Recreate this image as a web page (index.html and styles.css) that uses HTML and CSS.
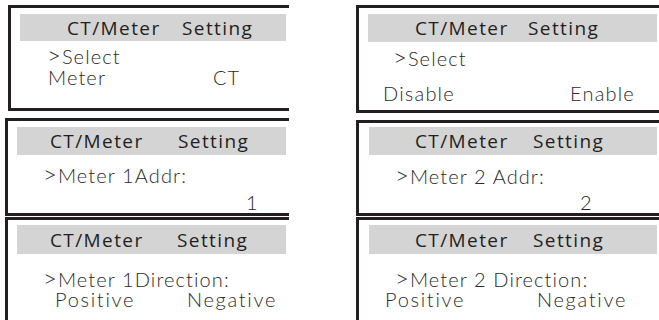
FILE: index.html
```html
<!DOCTYPE html>
<html lang="en">
<head>
<meta charset="UTF-8" />
<title>CT/Meter Setting</title>
<link rel="stylesheet" href="styles.css">
</head>
<body>
  <div class="sheet">
    <div class="col">
      <section class="screen screen-l1">
        <div class="bar bar-l1"><span>CT/Meter</span><span>Setting</span></div>
        <div class="line sel-l1"><span class="caret">&gt;</span>Select</div>
        <div class="line opts opts-l1"><span>Meter</span><span>CT</span></div>
      </section>
      <section class="screen screen-l2">
        <div class="bar bar-l2"><span>CT/Meter</span><span>Setting</span></div>
        <div class="line addr-l2"><span class="caret">&gt;</span>Meter 1Addr:</div>
        <div class="line value-l2">1</div>
      </section>
      <section class="screen screen-last">
        <div class="bar bar-l3"><span>CT/Meter</span><span>Setting</span></div>
        <div class="line dir-l3"><span class="caret">&gt;</span>Meter 1Direction:</div>
        <div class="line opts opts-l3"><span>Positive</span><span>Negative</span></div>
      </section>
    </div>
    <div class="col">
      <section class="screen screen-r1">
        <div class="bar bar-r1"><span>CT/Meter</span><span>Setting</span></div>
        <div class="line sel-r1"><span class="caret">&gt;</span>Select</div>
        <div class="line opts opts-r1"><span>Disable</span><span>Enable</span></div>
      </section>
      <section class="screen screen-r2">
        <div class="bar bar-r2"><span>CT/Meter</span><span>Setting</span></div>
        <div class="line addr-r2"><span class="caret">&gt;</span>Meter 2 Addr:</div>
        <div class="line value-r2">2</div>
      </section>
      <section class="screen screen-last">
        <div class="bar bar-r3"><span>CT/Meter</span><span>Setting</span></div>
        <div class="line dir-r3"><span class="caret">&gt;</span>Meter 2 Direction:</div>
        <div class="line opts opts-r3"><span>Positive</span><span>Negative</span></div>
      </section>
    </div>
  </div>
</body>
</html>
```

FILE: styles.css
```css
* {
  box-sizing: border-box;
}

body {
  margin: 0;
  background: #fff;
  font-family: "Open Sans", "Liberation Sans", sans-serif;
  color: #333;
}

.sheet {
  display: grid;
  grid-template-columns: 284px 303px;
  column-gap: 67px;
  padding: 5px 0 0 5px;
  height: 320px;
  overflow: hidden;
}

.col {
  display: flex;
  flex-direction: column;
}

/* each LCD screen: framed on three sides */
.screen {
  border: 3px solid #231f20;
  border-right: none;
}

.screen-l1 { margin-left: 3px; height: 106px; }
.screen-l2 { margin-top: 7px; height: 98px; }
.screen-r1 { height: 108px; }
.screen-r2 { margin-top: 7px; height: 96px; }

.screen-last {
  margin-top: 1px;
  flex: 1;
  border-bottom: none;
}

/* grey title bar */
.bar {
  display: grid;
  background: #d4d4d4;
  color: #231f20;
  font-size: 19px;
  letter-spacing: 1.4px;
  white-space: nowrap;
}

.bar-l1 { margin: 6px 3px 0 9px; height: 27px; line-height: 28px; padding-left: 47px; grid-template-columns: 115px auto; }
.bar-l2 { margin: 6px 3px 0 9px; height: 28px; line-height: 29px; padding-left: 33px; grid-template-columns: 128px auto; }
.bar-l3 { margin: 5px 3px 0 9px; height: 29px; line-height: 30px; padding-left: 33px; grid-template-columns: 127px auto; }
.bar-r1 { margin: 6px 2px 0 9px; height: 28px; line-height: 29px; padding-left: 47px; grid-template-columns: 113px auto; }
.bar-r2 { margin: 4px 2px 0 10px; height: 28px; line-height: 29px; padding-left: 46px; grid-template-columns: 118px auto; }
.bar-r3 { margin: 5px 2px 0 10px; height: 29px; line-height: 30px; padding-left: 46px; grid-template-columns: 118px auto; }

.line {
  font-family: "Lato", "Open Sans", sans-serif;
  font-size: 20px;
  font-weight: 300;
  line-height: 20px;
  height: 20px;
  letter-spacing: 1.1px;
  white-space: nowrap;
  color: #2a2a2a;
}

.caret {
  font-size: 24px;
  line-height: 0;
  letter-spacing: 0;
  margin-right: 1px;
}

.opts {
  display: grid;
  letter-spacing: 1.7px;
}

.sel-l1 { margin-top: 5px; padding-left: 36px; }
.opts-l1 { margin-top: 1px; padding-left: 37px; grid-template-columns: 165px auto; letter-spacing: 1.1px; }

.addr-l2 { margin-top: 10px; padding-left: 35px; }
.value-l2 { margin-top: 7px; padding-left: 238px; }

.dir-l3 { margin-top: 15px; padding-left: 35px; }
.opts-l3 { margin-top: 1px; line-height: 19px; padding-left: 47px; grid-template-columns: 132px auto; }

.sel-r1 { margin-top: 6px; padding-left: 34px; }
.opts-r1 { margin-top: 15px; padding-left: 24px; grid-template-columns: 187px auto; letter-spacing: 1.2px; }

.addr-r2 { margin-top: 11px; padding-left: 36px; }
.value-r2 { margin-top: 6px; padding-left: 221px; }

.dir-r3 { margin-top: 15px; padding-left: 36px; }
.opts-r3 { margin-top: 1px; line-height: 19px; padding-left: 26px; grid-template-columns: 152px auto; }
```
